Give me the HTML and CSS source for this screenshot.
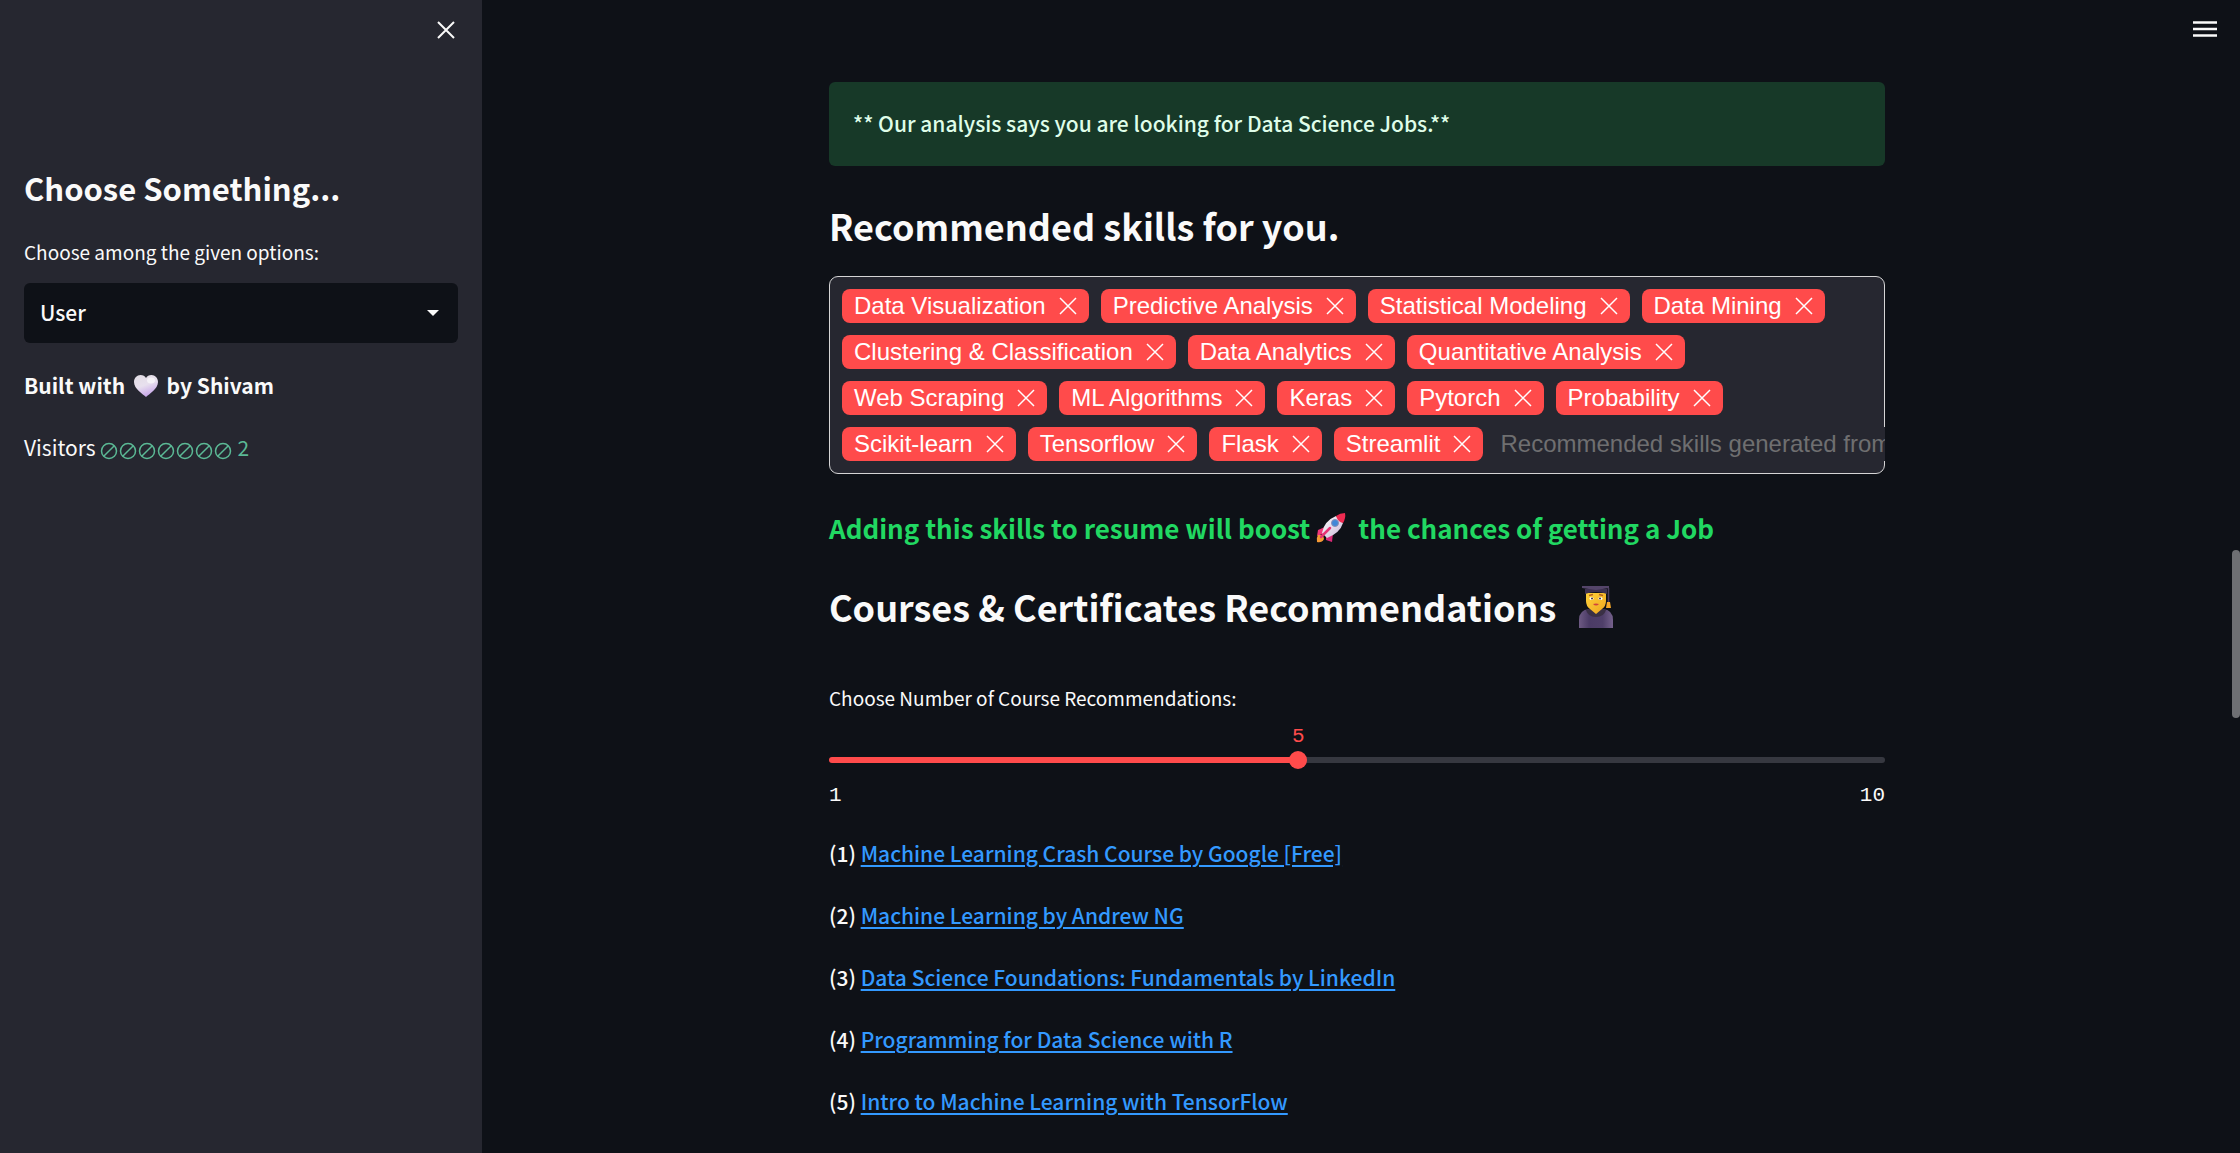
FILE: index.html
```html
<!DOCTYPE html>
<html lang="en">
<head>
<meta charset="utf-8">
<meta name="viewport" content="width=device-width, initial-scale=1">
<title>Resume Analyzer</title>
<link rel="stylesheet" href="styles.css">
</head>
<body>
<svg class="defs" aria-hidden="true">
  <defs>
    <symbol id="x" viewBox="0 0 18 18"><path d="M1 1 17 17M17 1 1 17" fill="none" stroke="currentColor"/></symbol>
    <symbol id="zero" viewBox="0 0 18 18"><circle cx="9" cy="9" r="7.5" fill="none" stroke="currentColor" stroke-width="1.5"/><path d="M3.7 14.3 14.3 3.7" stroke="currentColor" stroke-width="1.5"/></symbol>
    <linearGradient id="heartFill" x1="0" y1="0" x2=".4" y2="1"><stop offset="0" stop-color="#e2dde4"/><stop offset=".55" stop-color="#e8e0ee"/><stop offset="1" stop-color="#c9a9ea"/></linearGradient>
    <linearGradient id="hullFill" x1="0" y1="0" x2="1" y2="1"><stop offset="0" stop-color="#fff"/><stop offset="1" stop-color="#c9b6d6"/></linearGradient>
    <linearGradient id="gownFill" x1="0" y1="0" x2="1" y2="0"><stop offset="0" stop-color="#6d5a83"/><stop offset=".3" stop-color="#4b3b66"/><stop offset=".7" stop-color="#4f3f69"/><stop offset="1" stop-color="#75618c"/></linearGradient>
    <linearGradient id="faceFill" x1="0" y1="0" x2="1" y2="1"><stop offset="0" stop-color="#ffd23a"/><stop offset="1" stop-color="#eea51f"/></linearGradient>
  </defs>
</svg>

<div class="app">
  <aside class="sidebar">
    <div class="sidebar-top">
      <button class="icon-button" type="button" aria-label="Close sidebar"><svg class="close-icon"><use href="#x"/></svg></button>
    </div>
    <h2>Choose Something...</h2>
    <label class="field-label" for="role">Choose among the given options:</label>
    <div class="select-wrap">
      <select id="role"><option>User</option><option>Admin</option></select>
      <svg class="caret" viewBox="0 0 12 6" aria-hidden="true"><path d="M0 0H12L6 6Z" fill="currentColor"/></svg>
    </div>
    <p class="built">Built with
      <svg class="heart" viewBox="0 0 24 22" role="img" aria-label="love"><path d="M12 22C9 19 0 14 0 7C0 3 3 0 6.500 0C9 0 11 1.200 12 3C13 1.200 15 0 17.500 0C21 0 24 3 24 7C24 14 15 19 12 22Z" fill="url(#heartFill)"/><ellipse cx="17" cy="5.500" rx="4" ry="3" fill="#fff" opacity=".6"/></svg>
      by Shivam</p>
    <p class="visitors">Visitors
      <span class="counter"><svg><use href="#zero"/></svg><svg><use href="#zero"/></svg><svg><use href="#zero"/></svg><svg><use href="#zero"/></svg><svg><use href="#zero"/></svg><svg><use href="#zero"/></svg><svg><use href="#zero"/></svg><span class="count">2</span></span></p>
  </aside>

  <main class="main">
    <div class="content">
      <p class="alert" role="status">** Our analysis says you are looking for Data Science Jobs.**</p>
      <h3>Recommended skills for you.</h3>
      <div class="tags">
        <span class="tag">Data Visualization<button type="button" aria-label="Remove Data Visualization"><svg><use href="#x"/></svg></button></span>
        <span class="tag">Predictive Analysis<button type="button" aria-label="Remove Predictive Analysis"><svg><use href="#x"/></svg></button></span>
        <span class="tag">Statistical Modeling<button type="button" aria-label="Remove Statistical Modeling"><svg><use href="#x"/></svg></button></span>
        <span class="tag">Data Mining<button type="button" aria-label="Remove Data Mining"><svg><use href="#x"/></svg></button></span>
        <span class="tag">Clustering &amp; Classification<button type="button" aria-label="Remove Clustering &amp; Classification"><svg><use href="#x"/></svg></button></span>
        <span class="tag">Data Analytics<button type="button" aria-label="Remove Data Analytics"><svg><use href="#x"/></svg></button></span>
        <span class="tag">Quantitative Analysis<button type="button" aria-label="Remove Quantitative Analysis"><svg><use href="#x"/></svg></button></span>
        <span class="tag">Web Scraping<button type="button" aria-label="Remove Web Scraping"><svg><use href="#x"/></svg></button></span>
        <span class="tag">ML Algorithms<button type="button" aria-label="Remove ML Algorithms"><svg><use href="#x"/></svg></button></span>
        <span class="tag">Keras<button type="button" aria-label="Remove Keras"><svg><use href="#x"/></svg></button></span>
        <span class="tag">Pytorch<button type="button" aria-label="Remove Pytorch"><svg><use href="#x"/></svg></button></span>
        <span class="tag">Probability<button type="button" aria-label="Remove Probability"><svg><use href="#x"/></svg></button></span>
        <span class="tag">Scikit-learn<button type="button" aria-label="Remove Scikit-learn"><svg><use href="#x"/></svg></button></span>
        <span class="tag">Tensorflow<button type="button" aria-label="Remove Tensorflow"><svg><use href="#x"/></svg></button></span>
        <span class="tag">Flask<button type="button" aria-label="Remove Flask"><svg><use href="#x"/></svg></button></span>
        <span class="tag">Streamlit<button type="button" aria-label="Remove Streamlit"><svg><use href="#x"/></svg></button></span>
        <input class="tag-input" type="text" aria-label="Add a skill" placeholder="Recommended skills generated from System">
      </div>
      <h4>Adding this skills to resume will boost<svg class="rocket" viewBox="0 0 30 30" role="img" aria-label="rocket"><path d="M9 14 2 17 1 23 9 20Z" fill="#f0387a"/><path d="M17 20 16 29 10 27 10 20Z" fill="#d92a78"/><path d="M2 22Q0 25 1 29Q6 30 8 26L7 22Z" fill="#f59a35"/><path d="M6 20Q8 8 20 3L27 10Q24 20 11 25Z" fill="url(#hullFill)"/><path d="M20 3Q24 0 29 0Q30 5 27 10Q22 9 20 3Z" fill="#ef2b51"/><circle cx="19" cy="10" r="3.500" fill="#3f88d8" stroke="#8a8fb5"/><path d="M14 15 5 24" stroke="#e73476" stroke-width="2.500" stroke-linecap="round"/></svg>the chances of getting a Job</h4>
      <h3 class="courses">Courses &amp; Certificates Recommendations
        <svg class="student" viewBox="0 0 34 42" role="img" aria-label="student"><path d="M0 42V34Q0 24 10 23H24Q34 24 34 34V42Z" fill="url(#gownFill)"/><path d="M7 24Q17 20 27 24Q25 31 17 31Q9 31 7 24Z" fill="#3a3045"/><path d="M7 7H27V15Q27 20 23 23L17 28L11 23Q7 20 7 15Z" fill="url(#faceFill)"/><path d="M10 9.500 14 8.500M20 8.500 24 9.500" stroke="#b5631d" stroke-width="1.500"/><ellipse cx="12.500" cy="12.500" rx="2" ry="1.500" fill="#fff"/><ellipse cx="21.500" cy="12.500" rx="2" ry="1.500" fill="#fff"/><circle cx="13" cy="12.500" r="1" fill="#402a32"/><circle cx="21" cy="12.500" r="1" fill="#402a32"/><path d="M14 18Q17 17 20 18Q17 21 14 18Z" fill="#d0453c"/><path d="M6 3H28V8Q17 4 6 8Z" fill="#3d3150"/><path d="M3 0H30V2L17 4L3 2Z" fill="#54456a"/><path d="M29.500 2V17" stroke="#4c3d60" stroke-width="1.500"/><path d="M28 16H31L32 22H27Z" fill="#f5a82a"/></svg></h3>

      <div class="slider">
        <label class="field-label" for="count">Choose Number of Course Recommendations:</label>
        <div class="slider-body" style="--value:44.4444%">
          <output class="slider-value" for="count">5</output>
          <div class="track"><input id="count" type="range" min="1" max="10" value="5"></div>
          <div class="limits"><span>1</span><span>10</span></div>
        </div>
      </div>

      <ul class="course-list">
        <li>(1) <a href="#c1">Machine Learning Crash Course by Google [Free]</a></li>
        <li>(2) <a href="#c2">Machine Learning by Andrew NG</a></li>
        <li>(3) <a href="#c3">Data Science Foundations: Fundamentals by LinkedIn</a></li>
        <li>(4) <a href="#c4">Programming for Data Science with R</a></li>
        <li>(5) <a href="#c5">Intro to Machine Learning with TensorFlow</a></li>
      </ul>
    </div>
    <button class="icon-button menu" type="button" aria-label="Menu"><svg viewBox="0 0 24 16"><path d="M0 1.500H24M0 8H24M0 14.500H24" stroke="currentColor" stroke-width="2.600"/></svg></button>
  </main>
  <div class="scrollbar" aria-hidden="true"><div class="scroll-thumb"></div></div>
</div>
</body>
</html>
```
FILE: styles.css
```css
:root {
  --bg: #0e1117;
  --panel: #262730;
  --text: #fafafa;
  --accent: #ff4b4b;
  --sans: "Noto Sans CJK SC", "Noto Sans", sans-serif;
  --arial: "Liberation Sans", Arial, sans-serif;
  --mono: "Liberation Mono", "Courier New", monospace;
}

* { box-sizing: border-box; }

body {
  margin: 0;
  background: var(--bg);
  color: var(--text);
  font: 500 21px/38px var(--sans);
}

h2, h3, h4, p, ul { margin: 0; }
h2, h3, h4 { font-weight: 700; }
h2 { font-size: 31px; line-height: 40px; }
h3 { font-size: 36px; line-height: 50px; }
h4 { font-size: 26px; line-height: 36px; }

button, input, select {
  margin: 0;
  border: 0;
  background: none;
  color: inherit;
  font: inherit;
}

button { padding: 0; cursor: pointer; }
svg { display: inline-block; overflow: visible; }
.defs { position: absolute; width: 0; height: 0; }

.app {
  display: flex;
  min-height: 100vh;
  overflow: hidden;
}

/* Sidebar */
.sidebar {
  flex: 0 0 482px;
  padding: 12px 24px;
  background: var(--panel);
}

.sidebar-top {
  display: flex;
  justify-content: flex-end;
  height: 156px;
}

.icon-button {
  display: flex;
  align-items: center;
  justify-content: center;
  width: 24px;
  height: 36px;
}

.close-icon { width: 18px; height: 18px; stroke-width: 2; }

.field-label {
  display: block;
  font-size: 19px;
  font-weight: 400;
  line-height: 28px;
}

.sidebar h2 { margin-bottom: 30px; }
.select-wrap {
  display: grid;
  align-items: center;
  margin: 17px 0 23px;
}

.select-wrap > * { grid-area: 1 / 1; }

select {
  appearance: none;
  width: 100%;
  height: 60px;
  padding: 0 48px 3px 16px;
  border-radius: 6px;
  background: var(--bg);
}

.caret {
  justify-self: end;
  width: 12px;
  height: 6px;
  margin-right: 19px;
  pointer-events: none;
}

.built { margin-bottom: 24px; font-weight: 700; }
.heart { width: 24px; height: 22px; margin: 0 4px; vertical-align: -3px; }

.visitors { font-weight: 400; }
.counter { color: #5bb995; }
.counter svg { width: 18px; height: 18px; margin-right: 1px; vertical-align: -4px; }
.count { margin-left: 4px; }

/* Main column */
.main {
  position: relative;
  flex: 1;
  min-width: 0;
  padding: 82px 24px 0;
}

.menu { position: absolute; top: 11px; right: 15px; }
.menu svg { width: 24px; height: 16px; }

.content { max-width: 1056px; margin: 0 auto; }

.alert {
  margin-bottom: 34px;
  padding: 22px 24px 24px;
  border-radius: 6px;
  background: #173928;
  color: #dffde9;
}

.tags {
  display: flex;
  flex-wrap: wrap;
  gap: 12px;
  margin: 26px 0 36px;
  padding: 12px;
  border: 1px solid #d5d5d6;
  border-radius: 9px;
  background: var(--panel);
  font: 24px/34px var(--arial);
}

.tag {
  display: flex;
  align-items: center;
  gap: 13px;
  padding: 0 12px;
  border-radius: 8px;
  background: var(--accent);
  color: #fff;
}

.tag button, .tag svg { display: block; width: 18px; height: 18px; }
.tag svg { stroke-width: 1.5; }

.tag-input {
  flex: 1;
  min-width: 0;
  height: 34px;
  margin-right: -13px;
  padding: 0 0 0 5px;
  background: var(--panel);
}

.tag-input::placeholder { color: #6f6f70; opacity: 1; }

h4 { margin-bottom: 35px; color: #21d862; }
.rocket { width: 30px; height: 30px; margin: 0 12px 0 6px; vertical-align: -4px; }
.courses { margin-bottom: 53px; }
.student { width: 34px; height: 42px; margin-left: 14px; vertical-align: -6px; }

/* Slider */
.slider-body { padding-top: 13px; font: 21px/24px var(--mono); }
.slider-value {
  display: block;
  width: 26px;
  margin: 0 0 8px calc(var(--value) - 13px);
  color: var(--accent);
  text-align: center;
}

.track {
  display: flex;
  align-items: center;
  height: 6px;
  border-radius: 3px;
  background: linear-gradient(to right, var(--accent) var(--value), #363840 var(--value));
}

.track input {
  appearance: none;
  flex: 1;
  height: 18px;
  margin: 0 -9px;
}

.track input::-webkit-slider-thumb {
  appearance: none;
  width: 18px;
  height: 18px;
  border-radius: 50%;
  background: var(--accent);
}

.limits {
  display: flex;
  justify-content: space-between;
  margin: 21px 0 26px;
}

.course-list {
  display: grid;
  gap: 24px;
  padding: 0;
  list-style: none;
}

a {
  color: #3399ff;
  text-decoration-thickness: 2px;
  text-underline-offset: 3px;
}

.scrollbar { flex: 0 0 8px; padding-top: 550px; }
.scroll-thumb { height: 168px; border-radius: 4px; background: #6e6f73; }
```
